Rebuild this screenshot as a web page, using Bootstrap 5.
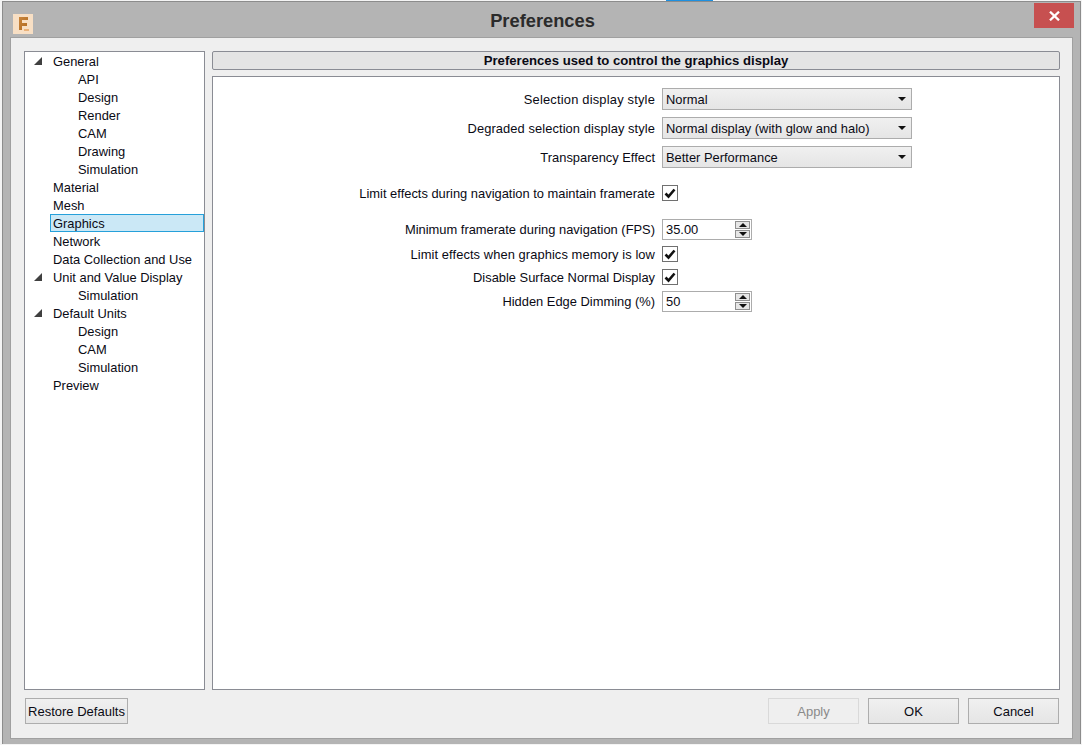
<!DOCTYPE html>
<html lang="en">
<head>
<meta charset="utf-8">
<title>Preferences</title>
<link href="https://cdn.jsdelivr.net/npm/bootstrap@5.3.0/dist/css/bootstrap.min.css" rel="stylesheet">
<style>
html,body{height:745px;overflow:hidden;}
body{background:linear-gradient(#1e90e0,#1e90e0) 666px 0/47px 1px no-repeat #f4f4f4;font-family:"Liberation Sans",Arial,sans-serif;font-size:12.9px;color:#0a0a14;line-height:18px;}
.pf-win{margin:1px 1px 0 2px;height:743px;background:#b4b4b4;border:1px solid #8c8c8c;border-bottom:0;padding:0 0 5px 7px;display:flex;flex-direction:column;}
.pf-title{height:35px;flex:none;display:flex;align-items:center;position:relative;}
.pf-logo{width:20px;height:20px;margin:8px 0 0 3px;display:block;}
.pf-heading{position:absolute;left:0;right:0;top:6px;text-align:center;font-size:18.3px;font-weight:700;color:#2b2b2b;line-height:26px;margin:0;padding-right:5px;}
.pf-close{position:absolute;right:6px;top:1px;width:40px;height:25px;background:#c75050;display:flex;align-items:center;justify-content:center;}
.pf-panel{background:#efefef;border:1px solid #a0a0a0;flex:1;padding:13px 12px 0 13px;display:flex;flex-direction:column;height:702px;width:1063px;}
.pf-split{display:flex;gap:7px;height:639px;}
.pf-tree{width:181px;flex:none;background:#fff;border:1px solid #8a8c94;}
.pf-node{height:18px;line-height:20px;padding-left:28px;position:relative;white-space:nowrap;}
.pf-node.sub{padding-left:53px;}
.pf-node.sel{background:#cbe8f6;outline:1px solid #26a0da;outline-offset:-1px;margin-left:25px;padding-left:3px;}
.pf-tri{position:absolute;left:9px;top:5px;width:8px;height:8px;}
.pf-right{flex:1;display:flex;flex-direction:column;gap:6px;min-width:0;}
.pf-head{height:19px;background:#e4e4e4;border:1px solid #8a8c94;border-radius:2px;font-weight:700;font-size:13.15px;text-align:center;line-height:17px;}
.pf-box{flex:1;background:#fff;border:1px solid #8a8c94;padding-top:11px;}
.pf-row{display:flex;align-items:center;gap:7px;}
.pf-lbl{width:442px;height:18px;line-height:20px;flex:none;text-align:right;white-space:nowrap;}
.pf-lbl.pf-up1{line-height:18px;}
.pf-wide{letter-spacing:.19px;}
.pf-wider{letter-spacing:.08px;}
.pf-sel{width:250px;height:22px;border:1px solid #acacac;background:linear-gradient(#f0f0f0,#e5e5e5);padding:2px 3px 0;display:flex;align-items:center;justify-content:space-between;}
.pf-caret{width:0;height:0;border-left:4px solid transparent;border-right:4px solid transparent;border-top:4px solid #111;margin:-2px 2px 0 0;}
.pf-chk{width:16px;height:16px;border:1px solid #707070;background:#fff;display:block;}
.pf-spin{width:90px;height:21px;border:1px solid #acacac;background:#fff;padding:0 3px;display:flex;align-items:center;justify-content:space-between;position:relative;}
.pf-arrows{position:absolute;right:1px;top:1px;bottom:1px;width:15px;display:flex;flex-direction:column;gap:1px;}
.pf-arrows span{flex:1;background:#e6e6e6;border:1px solid #8f8f8f;display:flex;align-items:center;justify-content:center;}
.pf-up{width:0;height:0;border-left:4px solid transparent;border-right:4px solid transparent;border-bottom:4px solid #111;}
.pf-dn{width:0;height:0;border-left:4px solid transparent;border-right:4px solid transparent;border-top:4px solid #111;}
.mt5{margin-top:5px;}.mt7{margin-top:7px;}.mt16{margin-top:16px;}.mt17{margin-top:17px;}
.pf-foot{display:flex;justify-content:space-between;padding:8px 0 0;}
.pf-foot .btn{height:26px;padding:0;border-radius:0;border:1px solid #adadad;background:linear-gradient(#f0f0f0,#e5e5e5);font-size:13px;color:#0a0a14;line-height:26px;}
.pf-foot .pf-restore{width:103px;margin-left:1px;}
.pf-foot .pf-act{width:91px;}
.pf-acts{display:flex;gap:9px;margin-right:1px;}
.pf-foot .btn:disabled{opacity:1;background:#efefef;border-color:#d9d9d9;color:#8a8a8a;}
</style>
</head>
<body>
<div class="pf-win">
  <div class="pf-title">
    <svg class="pf-logo" viewBox="0 0 20 20">
      <defs><linearGradient id="g" x1="0" y1="0" x2="1" y2="1"><stop offset="0" stop-color="#c9853c"/><stop offset="1" stop-color="#b06a20"/></linearGradient></defs>
      <rect width="20" height="20" fill="#f8dfc4"/>
      <path d="M6 3h9v3H9v3h5v3H9v4H6z" fill="url(#g)"/>
      <rect x="11" y="15" width="5" height="2" fill="#eab27a"/>
    </svg>
    <h1 class="pf-heading">Preferences</h1>
    <div class="pf-close">
      <svg width="11" height="10" viewBox="0 0 11 10"><path d="M1 .7l9 8.6M10 .7L1 9.3" stroke="#fff" stroke-width="2.3" fill="none"/></svg>
    </div>
  </div>
  <div class="pf-panel">
    <div class="pf-split">
      <div class="pf-tree">
        <div class="pf-node"><svg class="pf-tri" viewBox="0 0 8 8"><path d="M8 0v8H0z" fill="#404040"/></svg>General</div>
        <div class="pf-node sub">API</div>
        <div class="pf-node sub">Design</div>
        <div class="pf-node sub">Render</div>
        <div class="pf-node sub">CAM</div>
        <div class="pf-node sub">Drawing</div>
        <div class="pf-node sub">Simulation</div>
        <div class="pf-node">Material</div>
        <div class="pf-node">Mesh</div>
        <div class="pf-node sel">Graphics</div>
        <div class="pf-node">Network</div>
        <div class="pf-node">Data Collection and Use</div>
        <div class="pf-node"><svg class="pf-tri" viewBox="0 0 8 8"><path d="M8 0v8H0z" fill="#404040"/></svg>Unit and Value Display</div>
        <div class="pf-node sub">Simulation</div>
        <div class="pf-node"><svg class="pf-tri" viewBox="0 0 8 8"><path d="M8 0v8H0z" fill="#404040"/></svg>Default Units</div>
        <div class="pf-node sub">Design</div>
        <div class="pf-node sub">CAM</div>
        <div class="pf-node sub">Simulation</div>
        <div class="pf-node">Preview</div>
      </div>
      <div class="pf-right">
        <div class="pf-head">Preferences used to control the graphics display</div>
        <div class="pf-box">
          <div class="pf-row"><span class="pf-lbl pf-wide">Selection display style</span><div class="pf-sel"><span>Normal</span><i class="pf-caret"></i></div></div>
          <div class="pf-row mt7"><span class="pf-lbl pf-wider">Degraded selection display style</span><div class="pf-sel"><span>Normal display (with glow and halo)</span><i class="pf-caret"></i></div></div>
          <div class="pf-row mt7"><span class="pf-lbl">Transparency Effect</span><div class="pf-sel"><span>Better Performance</span><i class="pf-caret"></i></div></div>
          <div class="pf-row mt16"><span class="pf-lbl">Limit effects during navigation to maintain framerate</span><svg class="pf-chk" viewBox="0 0 14 14"><path d="M2.5 7.5l3 3 6-7" stroke="#111" stroke-width="2.6" fill="none"/></svg></div>
          <div class="pf-row mt17"><span class="pf-lbl pf-up1">Minimum framerate during navigation (FPS)</span><div class="pf-spin"><span>35.00</span><div class="pf-arrows"><span><i class="pf-up"></i></span><span><i class="pf-dn"></i></span></div></div></div>
          <div class="pf-row mt5"><span class="pf-lbl pf-wider">Limit effects when graphics memory is low</span><svg class="pf-chk" viewBox="0 0 14 14"><path d="M2.5 7.5l3 3 6-7" stroke="#111" stroke-width="2.6" fill="none"/></svg></div>
          <div class="pf-row mt5"><span class="pf-lbl">Disable Surface Normal Display</span><svg class="pf-chk" viewBox="0 0 14 14"><path d="M2.5 7.5l3 3 6-7" stroke="#111" stroke-width="2.6" fill="none"/></svg></div>
          <div class="pf-row mt5"><span class="pf-lbl pf-up1">Hidden Edge Dimming (%)</span><div class="pf-spin"><span>50</span><div class="pf-arrows"><span><i class="pf-up"></i></span><span><i class="pf-dn"></i></span></div></div></div>
        </div>
      </div>
    </div>
    <div class="pf-foot">
      <button type="button" class="btn pf-restore">Restore Defaults</button>
      <div class="pf-acts">
        <button type="button" class="btn pf-act" disabled>Apply</button>
        <button type="button" class="btn pf-act">OK</button>
        <button type="button" class="btn pf-act">Cancel</button>
      </div>
    </div>
  </div>
</div>
<script src="https://cdn.jsdelivr.net/npm/bootstrap@5.3.0/dist/js/bootstrap.bundle.min.js"></script>
</body>
</html>
